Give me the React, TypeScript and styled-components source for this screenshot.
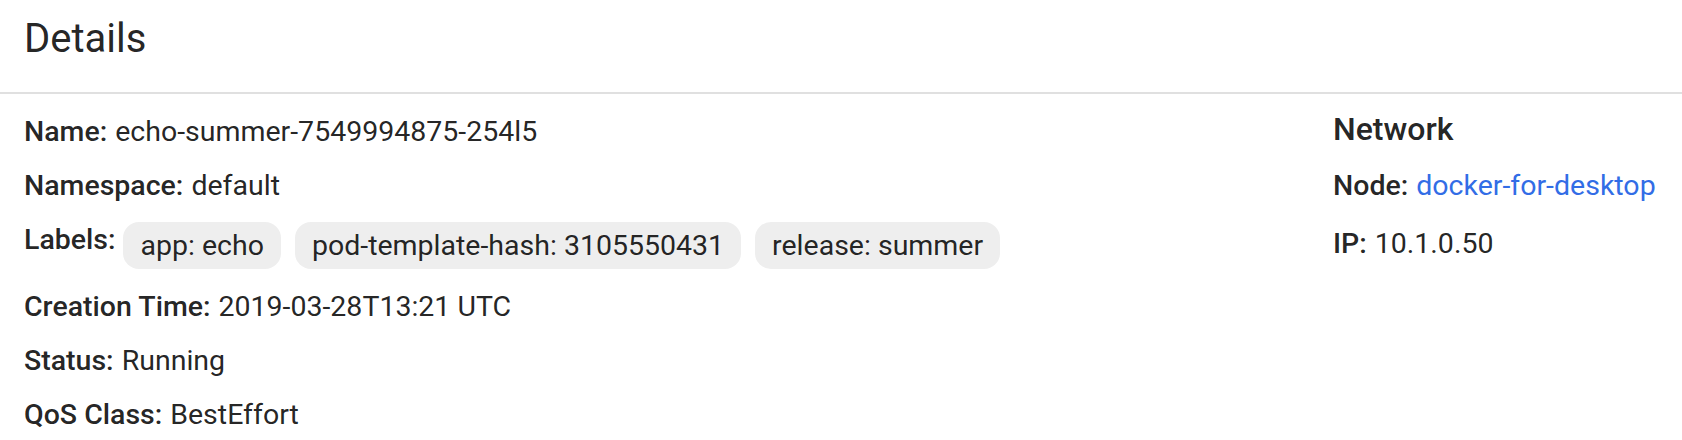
import React from 'react'
import styled, { createGlobalStyle } from 'styled-components'

const GlobalStyle = createGlobalStyle`
  html, body {
    margin: 0;
    padding: 0;
    background: #ffffff;
  }
  body {
    font-family: Roboto, 'Noto Sans', 'Liberation Sans', sans-serif;
    color: rgba(0, 0, 0, 0.87);
  }
`

const Card = styled.section`
  width: 1682px;
  height: 440px;
  overflow: hidden;
  background: #ffffff;
`

const Header = styled.header`
  height: 94px;
  box-sizing: border-box;
  padding: 15px 24px 0;
  border-bottom: 2px solid #e0e0e0;
`

const Title = styled.h2`
  margin: 0;
  font-size: 40px;
  font-weight: 400;
  line-height: normal;
`

const Body = styled.div`
  display: grid;
  grid-template-columns: 1fr 325px;
  padding: 21px 24px 0;
`

const Column = styled.div<{ $gap: number }>`
  display: flex;
  flex-direction: column;
  gap: ${(p) => p.$gap}px;
`

const SectionTitle = styled.h3`
  margin: -5px 0 -4px;
  font-size: 32px;
  font-weight: 500;
  line-height: normal;
`

const Row = styled.div`
  display: flex;
  align-items: flex-start;
  font-size: 28.5px;
  line-height: normal;
  white-space: nowrap;
`

const Key = styled.span`
  font-weight: 500;
  margin-right: 8px;
`

const Value = styled.span<{ $link?: boolean }>`
  color: ${(p) => (p.$link ? '#326de6' : 'inherit')};
`

const Chips = styled.div`
  display: flex;
  gap: 14px;
`

const Chip = styled.span`
  display: inline-flex;
  align-items: center;
  height: 47px;
  margin-top: -1px;
  padding: 0 17px;
  border-radius: 16px;
  background: #eeeeee;
`

const labels = ['app: echo', 'pod-template-hash: 3105550431', 'release: summer']

export default function App() {
  return (
    <Card>
      <GlobalStyle />
      <Header>
        <Title>Details</Title>
      </Header>
      <Body>
        <Column $gap={21}>
          <Row>
            <Key>Name:</Key>
            <Value>echo-summer-7549994875-254l5</Value>
          </Row>
          <Row>
            <Key>Namespace:</Key>
            <Value>default</Value>
          </Row>
          <Row>
            <Key>Labels:</Key>
            <Chips>
              {labels.map((l) => (
                <Chip key={l}>{l}</Chip>
              ))}
            </Chips>
          </Row>
          <Row>
            <Key>Creation Time:</Key>
            <Value>2019-03-28T13:21 UTC</Value>
          </Row>
          <Row>
            <Key>Status:</Key>
            <Value>Running</Value>
          </Row>
          <Row>
            <Key>QoS Class:</Key>
            <Value>BestEffort</Value>
          </Row>
        </Column>
        <Column $gap={25}>
          <SectionTitle>Network</SectionTitle>
          <Row>
            <Key>Node:</Key>
            <Value $link>docker-for-desktop</Value>
          </Row>
          <Row>
            <Key>IP:</Key>
            <Value>10.1.0.50</Value>
          </Row>
        </Column>
      </Body>
    </Card>
  )
}
